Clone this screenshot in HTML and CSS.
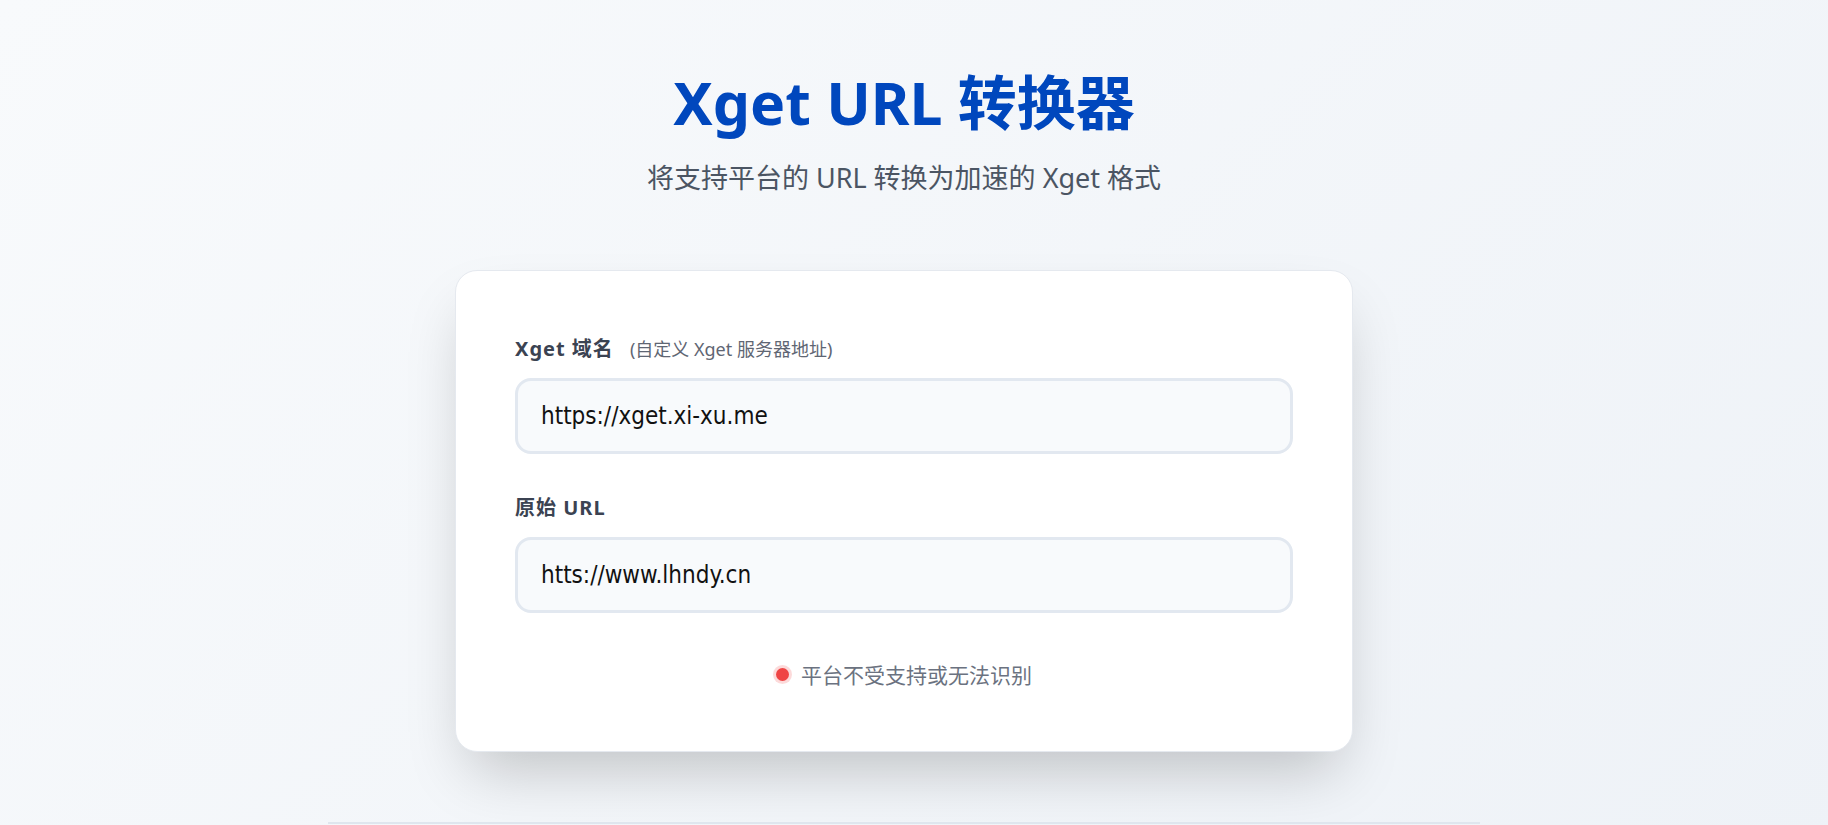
FILE: index.html
```html
<!DOCTYPE html>
<html lang="zh-CN">
<head>
    <meta charset="UTF-8">
    <title>Xget URL 转换器</title>
    <link rel="stylesheet" href="styles.css">
</head>
<body>
    <div class="page">
        <header class="header">
            <h1 class="title">Xget URL 转换器</h1>
            <p class="subtitle">将支持平台的 URL 转换为加速的 Xget 格式</p>
        </header>

        <main class="card">
            <div class="field">
                <label class="label" for="domain">
                    <span>Xget 域名</span>
                    <span class="hint">(自定义 Xget 服务器地址)</span>
                </label>
                <input id="domain" class="input" type="text" value="https://xget.xi-xu.me">
            </div>

            <div class="field">
                <label class="label" for="url">
                    <span>原始 URL</span>
                </label>
                <input id="url" class="input" type="text" value="htts://www.lhndy.cn">
            </div>

            <div class="status">
                <span class="status-dot"></span>
                <span class="status-text">平台不受支持或无法识别</span>
            </div>
        </main>

        <footer class="footer"></footer>
    </div>
</body>
</html>
```

FILE: styles.css
```css
html {
    overflow: hidden;
}
body {
    margin: 0;
    min-height: 100vh;
    font-family: "Noto Sans", "Noto Sans CJK SC", sans-serif;
    background: linear-gradient(135deg, #f8fafc 0%, #eef2f7 100%);
    color: #374151;
}
.page {
    padding-right: 20px;
    display: flex;
    flex-direction: column;
    align-items: center;
}
.header {
    text-align: center;
    padding-top: 62px;
}
.title {
    margin: 0;
    font-size: 59px;
    line-height: 80px;
    font-weight: 700;
    color: #0047bd;
}
.subtitle {
    margin: 18px 0 0;
    font-size: 27px;
    line-height: 36px;
    color: #4b5563;
}
.card {
    box-sizing: border-box;
    width: 898px;
    margin-top: 74px;
    padding: 59px 59px 62px;
    background: #fff;
    border: 1px solid #e5e9ef;
    border-radius: 22px;
    box-shadow: 0 31px 62px -15px rgba(0, 0, 0, 0.22);
}
.field {
    margin-bottom: 35px;
}
.label {
    display: flex;
    align-items: baseline;
    gap: 16px;
    height: 38px;
    line-height: 38px;
    margin-bottom: 10px;
    font-size: 20px;
    font-weight: 700;
    letter-spacing: 1px;
    color: #3b4352;
}
.hint {
    font-size: 18px;
    font-weight: 400;
    letter-spacing: 0;
    color: #5f6673;
}
.input {
    display: block;
    box-sizing: border-box;
    width: 100%;
    height: 76px;
    padding: 0 23px;
    font-family: "DejaVu Sans Condensed", "DejaVu Sans", sans-serif;
    font-stretch: condensed;
    font-size: 24px;
    color: #111;
    background: #f8fafc;
    border: 3px solid #e2e8f0;
    border-radius: 16px;
    outline: none;
}
.field:nth-child(2) {
    margin-bottom: 46px;
}
.status {
    display: flex;
    align-items: center;
    justify-content: center;
    gap: 12px;
    height: 30px;
    font-size: 21px;
    color: #6b7280;
}
.status-dot {
    width: 13px;
    height: 13px;
    border-radius: 50%;
    background: #ef4444;
    box-shadow: 0 0 0 3px rgba(239, 68, 68, 0.2);
}
.footer {
    width: 1152px;
    margin-top: 70px;
    border-top: 2px solid #dfe6ee;
    height: 40px;
}
```
